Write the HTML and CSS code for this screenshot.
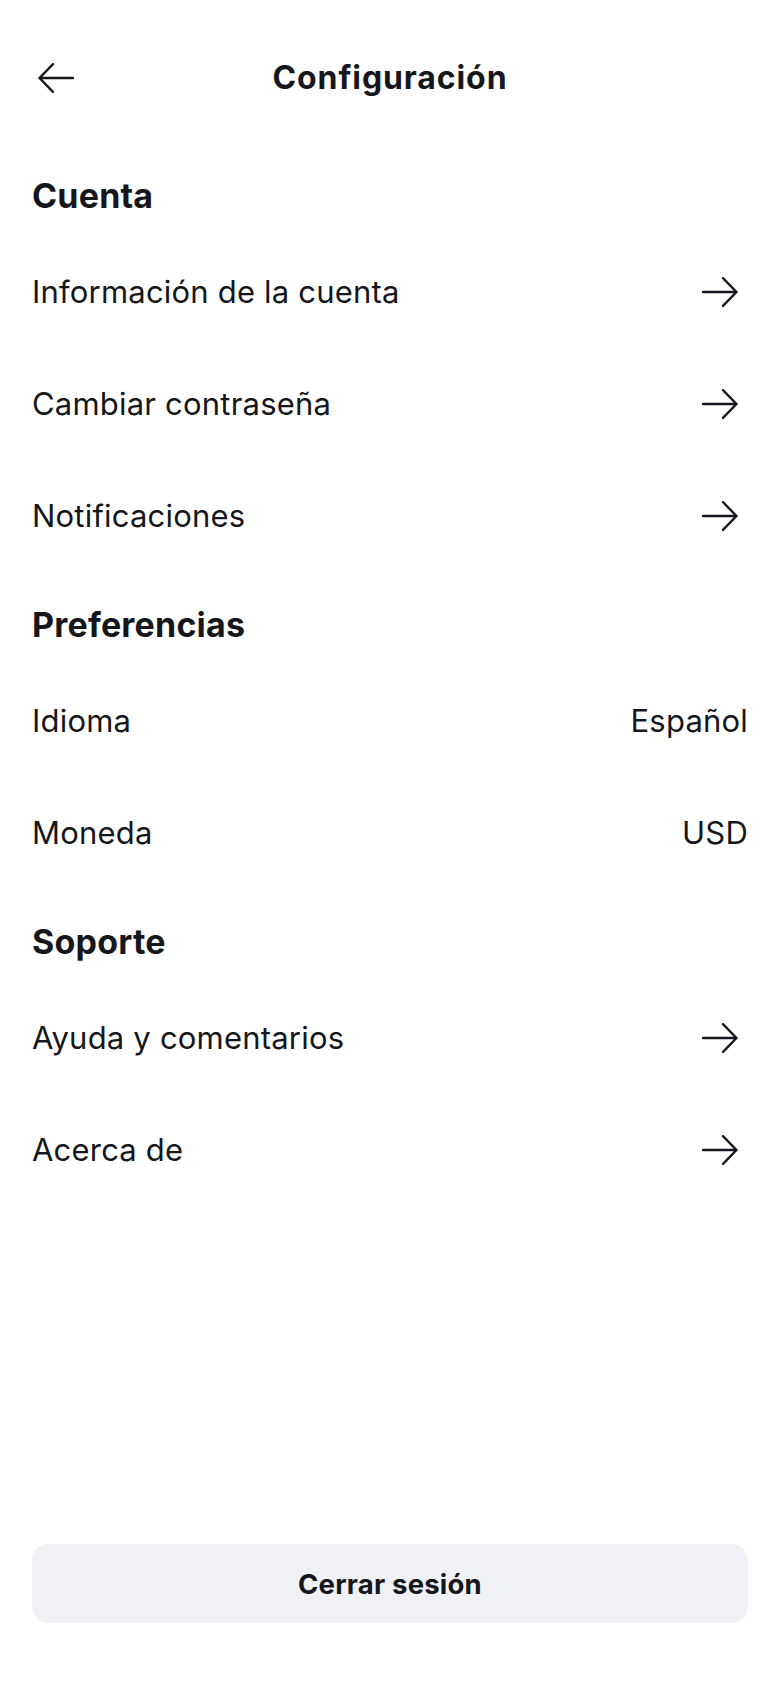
FILE: index.html
```html
<!DOCTYPE html>
<html lang="es">
<head>
<meta charset="utf-8">
<title>Configuración</title>
<link rel="stylesheet" href="styles.css">
</head>
<body>
<div class="screen">
  <header class="topbar">
    <button class="back" aria-label="Atrás">
      <svg width="36" height="30" viewBox="0 0 36 30" fill="none" stroke="#15171c" stroke-width="2.4" stroke-linecap="round" stroke-linejoin="round"><path d="M35 15H1.5M15 1.2L1.5 15L15 28.8"/></svg>
    </button>
    <h1 class="title">Configuración</h1>
    <span class="spacer"></span>
  </header>

  <main class="content">
    <section class="section">
      <h2 class="section-title">Cuenta</h2>
      <div class="row"><span class="label">Información de la cuenta</span><svg class="chev" width="36" height="30" viewBox="0 0 36 30" fill="none" stroke="#15171c" stroke-width="2.4" stroke-linecap="round" stroke-linejoin="round"><path d="M1 15H34.5M21 1.2L34.5 15L21 28.8"/></svg></div>
      <div class="row"><span class="label">Cambiar contraseña</span><svg class="chev" width="36" height="30" viewBox="0 0 36 30" fill="none" stroke="#15171c" stroke-width="2.4" stroke-linecap="round" stroke-linejoin="round"><path d="M1 15H34.5M21 1.2L34.5 15L21 28.8"/></svg></div>
      <div class="row"><span class="label">Notificaciones</span><svg class="chev" width="36" height="30" viewBox="0 0 36 30" fill="none" stroke="#15171c" stroke-width="2.4" stroke-linecap="round" stroke-linejoin="round"><path d="M1 15H34.5M21 1.2L34.5 15L21 28.8"/></svg></div>
    </section>

    <section class="section">
      <h2 class="section-title">Preferencias</h2>
      <div class="row"><span class="label">Idioma</span><span class="value">Español</span></div>
      <div class="row"><span class="label">Moneda</span><span class="value">USD</span></div>
    </section>

    <section class="section">
      <h2 class="section-title">Soporte</h2>
      <div class="row"><span class="label">Ayuda y comentarios</span><svg class="chev" width="36" height="30" viewBox="0 0 36 30" fill="none" stroke="#15171c" stroke-width="2.4" stroke-linecap="round" stroke-linejoin="round"><path d="M1 15H34.5M21 1.2L34.5 15L21 28.8"/></svg></div>
      <div class="row"><span class="label">Acerca de</span><svg class="chev" width="36" height="30" viewBox="0 0 36 30" fill="none" stroke="#15171c" stroke-width="2.4" stroke-linecap="round" stroke-linejoin="round"><path d="M1 15H34.5M21 1.2L34.5 15L21 28.8"/></svg></div>
    </section>
  </main>

  <footer class="footer">
    <button class="logout">Cerrar sesión</button>
  </footer>
</div>
</body>
</html>
```

FILE: styles.css
```css
* { box-sizing: border-box; }
html, body { margin: 0; padding: 0; background: #ffffff; }
body {
  font-family: Inter, "Noto Sans", "Liberation Sans", sans-serif;
  color: #15171c;
}
.screen {
  width: 780px;
  height: 1688px;
  display: flex;
  flex-direction: column;
  padding: 0 32px;
}
.topbar {
  display: flex;
  align-items: center;
  justify-content: space-between;
  height: 60px;
  margin-top: 48px;
  margin-bottom: 35px;
}
.back {
  width: 48px;
  height: 48px;
  padding: 0 0 0 6px;
  border: 0;
  background: none;
  display: flex;
  align-items: center;
  justify-content: flex-start;
}
.spacer { width: 48px; }
.title {
  margin: 0;
  font-size: 32px;
  font-weight: 700;
  letter-spacing: 0.9px;
  line-height: 40px;
}
.content { flex: 1; }
.section { padding-top: 33px; }
.section-title {
  margin: 0 0 20px;
  font-size: 34px;
  font-weight: 700;
  line-height: 40px;
  letter-spacing: 0.2px;
}
.row {
  height: 112px;
  display: flex;
  align-items: center;
  justify-content: space-between;
}
.label, .value {
  font-size: 31px;
  font-weight: 400;
  line-height: 40px;
  letter-spacing: 0.2px;
}
.chev { margin-right: 10px; }
.footer { padding-bottom: 65px; }
.logout {
  width: 100%;
  height: 79px;
  border: 0;
  border-radius: 16px;
  background: #f0f1f5;
  color: #15171c;
  font-family: inherit;
  font-size: 27.5px;
  font-weight: 700;
  letter-spacing: 0.2px;
}
```
